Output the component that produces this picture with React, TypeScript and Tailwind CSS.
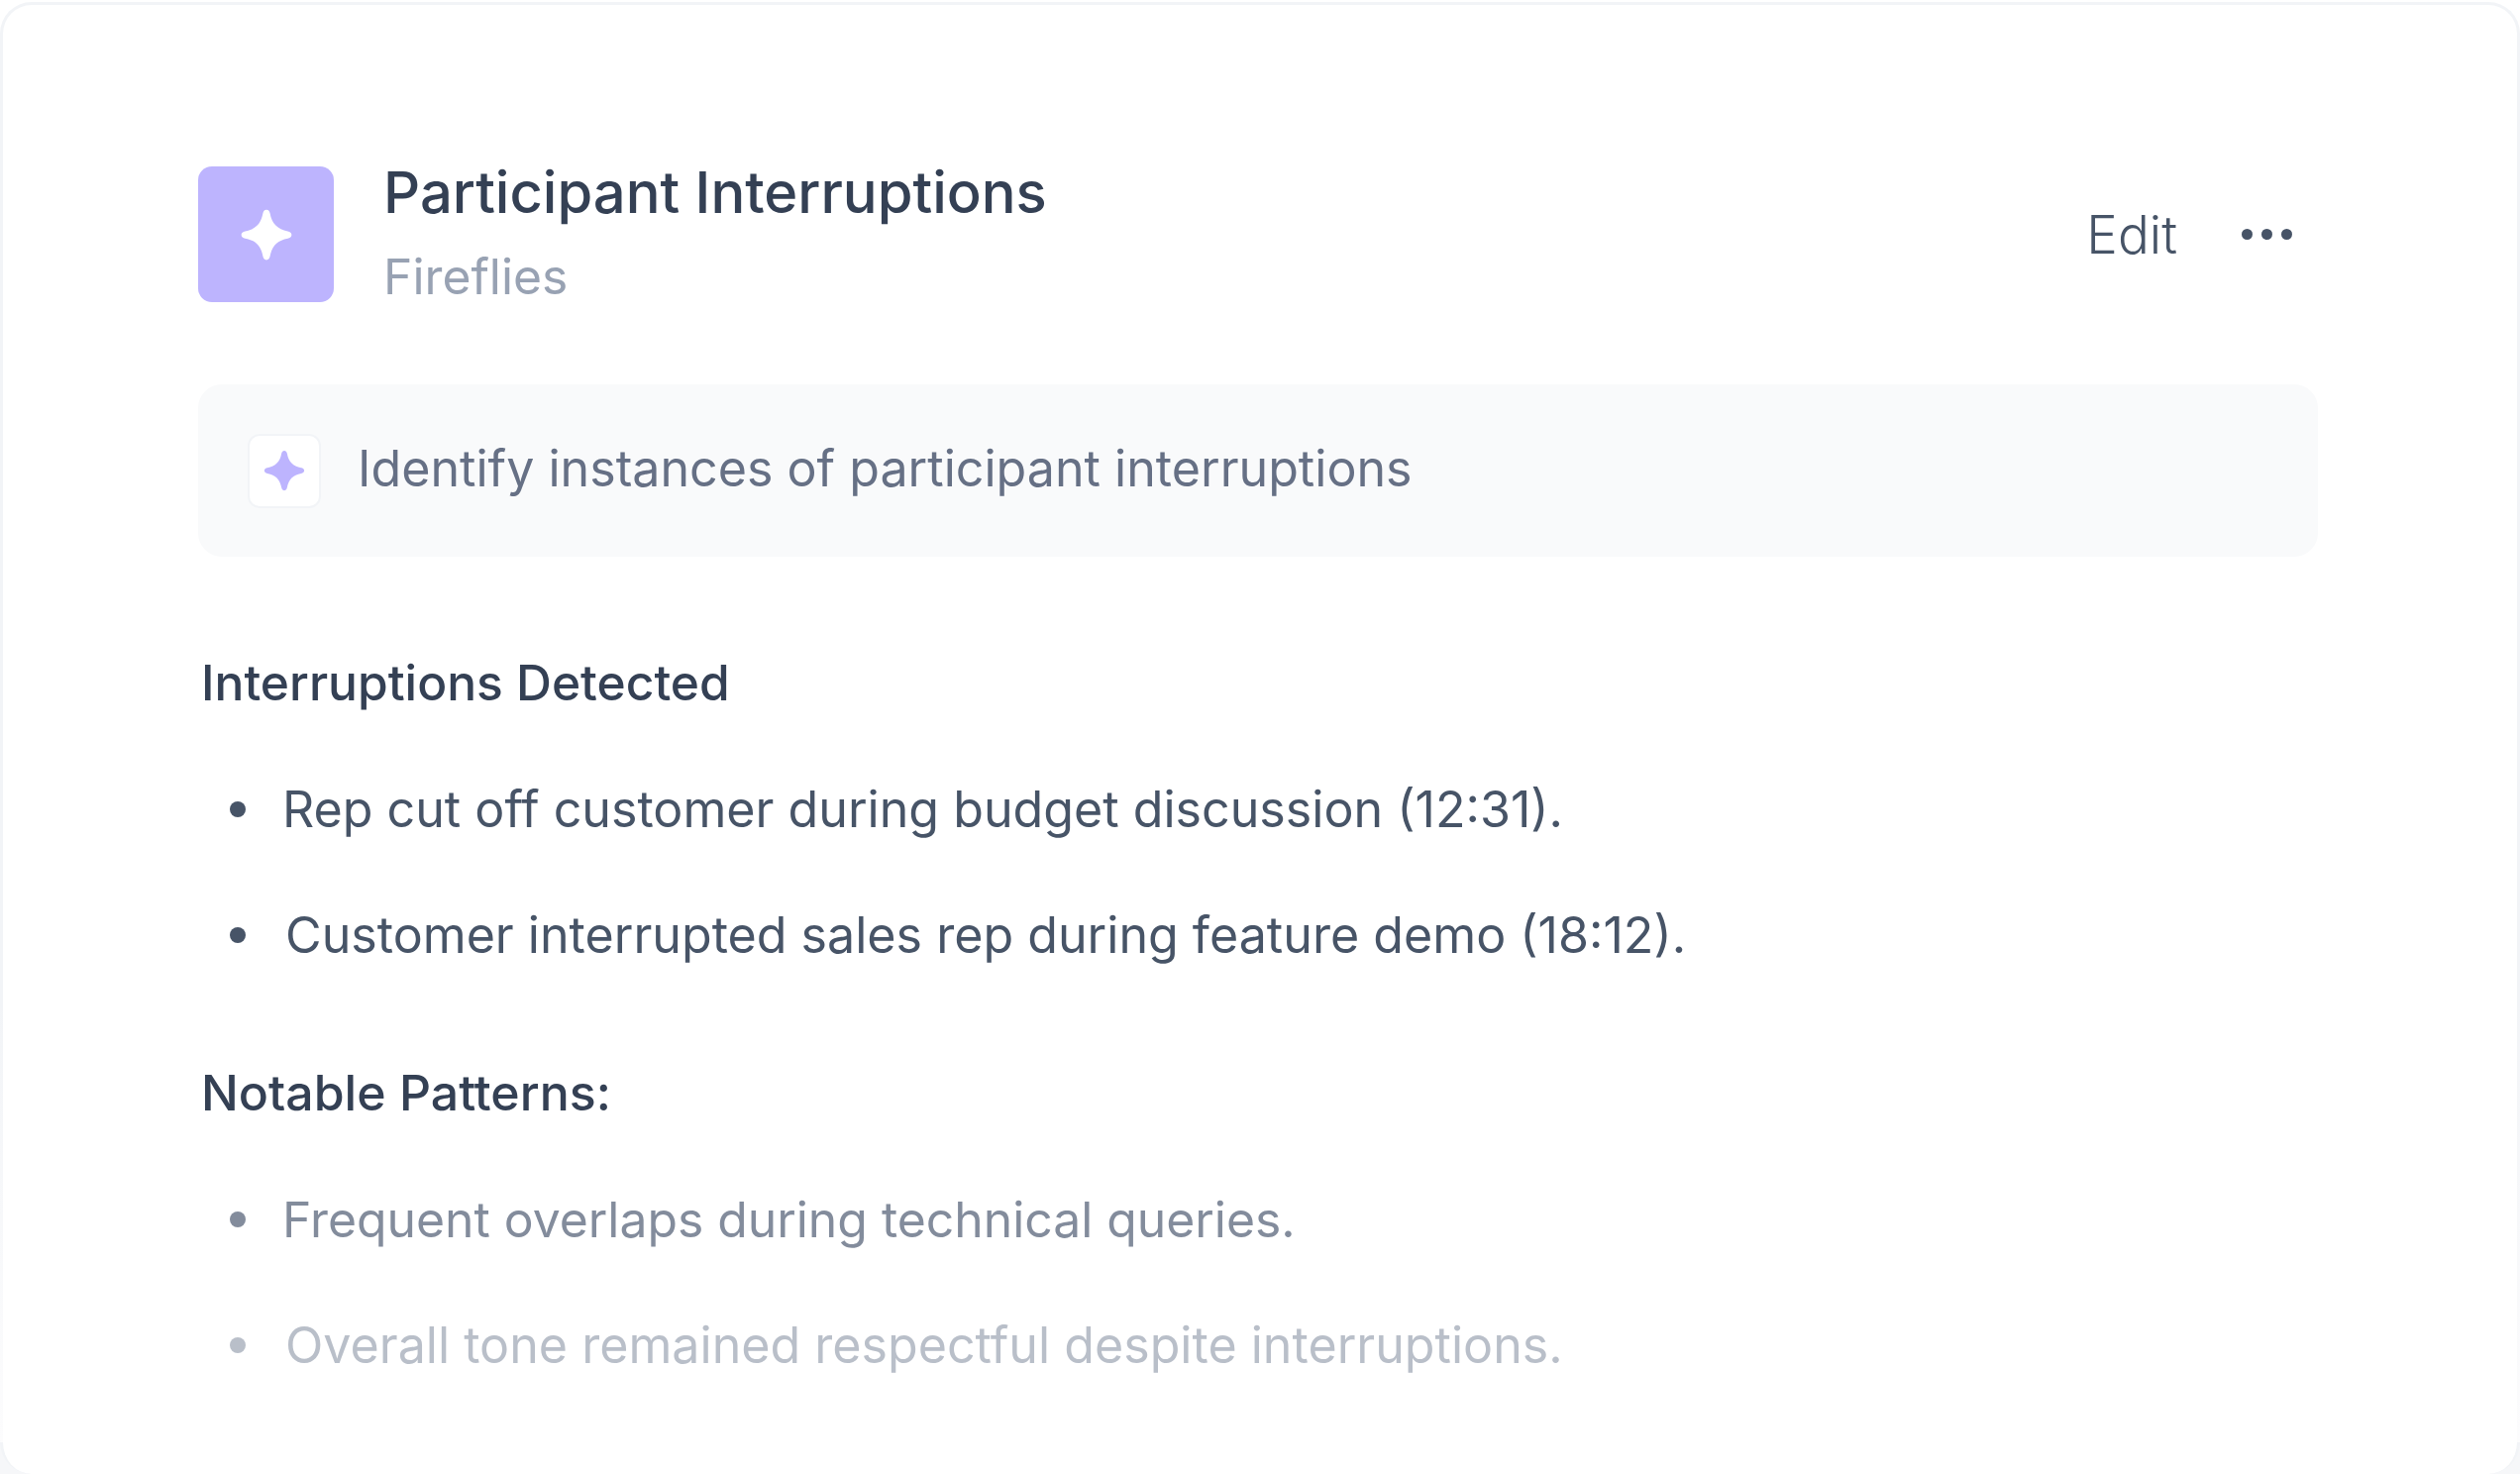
const sparkle =
  'M12 1.5c.9 0 1.3.7 1.5 1.6.8 4.3 3.1 6.6 7.4 7.4.9.2 1.6.6 1.6 1.5s-.7 1.3-1.6 1.5c-4.3.8-6.6 3.1-7.4 7.4-.2.9-.6 1.6-1.5 1.6s-1.3-.7-1.5-1.6c-.8-4.3-3.1-6.6-7.4-7.4-.9-.2-1.6-.6-1.6-1.5s.7-1.3 1.6-1.5c4.3-.8 6.6-3.1 7.4-7.4.2-.9.6-1.6 1.5-1.6z';

function Sparkle({ className }: { className: string }) {
  return (
    <svg className={className} viewBox="0 0 24 24" fill="currentColor" aria-hidden>
      <path d={sparkle} />
    </svg>
  );
}

function Bullet({ text, color, dot, indent }: { text: string; color: string; dot: string; indent: string }) {
  return (
    <li className={`flex h-[127px] items-center ${color}`}>
      <span className={`ml-[29px] h-4 w-4 shrink-0 rounded-full ${dot}`} />
      <span className={indent}>{text}</span>
    </li>
  );
}

export default function App() {
  return (
    <div className="relative h-[1488px] w-[2544px] overflow-hidden bg-white pt-[2px] font-['Inter',sans-serif]">
      {/* corners behind the card, and the side borders fading out towards the bottom */}
      <div className="absolute bottom-0 left-0 h-[32px] w-[32px] bg-[#f6f7f9]" />
      <div className="absolute right-0 bottom-0 h-[32px] w-[32px] bg-[#f6f7f9]" />
      <div className="relative h-full rounded-[32px] border-x-[3px] border-t-[3px] border-[#f2f4f7] bg-white px-[197px] pt-[163px]">
        <header className="flex h-[137px] items-center justify-between">
          <div className="flex items-center gap-[50px]">
            <div className="flex h-[137px] w-[137px] items-center justify-center rounded-[14px] bg-[#bdb4fe] text-white">
              <Sparkle className="h-[58px] w-[58px]" />
            </div>
            <div className="-mt-[3px]">
              <h1 className="-mt-[3px] text-[57.9px] leading-[70px] font-medium text-[#344054]">Participant Interruptions</h1>
              <p className="mt-[20px] text-[49.8px] leading-[60px] text-[#98a2b3]">Fireflies</p>
            </div>
          </div>
          <div className="mr-[30px] flex items-center gap-[65px] text-[#475467]">
            <span className="text-[53px] leading-[60px] font-light">Edit</span>
            <div className="flex gap-[9px]">
              <span className="h-[11px] w-[11px] rounded-full bg-[#475467]" />
              <span className="h-[11px] w-[11px] rounded-full bg-[#475467]" />
              <span className="h-[11px] w-[11px] rounded-full bg-[#475467]" />
            </div>
          </div>
        </header>

        <div className="mt-[83px] flex h-[174px] w-[2140px] items-center gap-[37px] rounded-[24px] bg-[#f9fafb] pl-[50px]">
          <div className="flex h-[75px] w-[74px] items-center justify-center rounded-[12px] border-2 border-[#f2f4f7] bg-white text-[#bdb4fe]">
            <Sparkle className="h-[46px] w-[46px]" />
          </div>
          <p className="-mt-[4px] text-[50.15px] leading-[62px] text-[#667085]">Identify instances of participant interruptions</p>
        </div>

        <section className="mt-[96px] pl-[3px] text-[50.15px] leading-[62px]">
          <h2 className="text-[49.7px] font-medium text-[#344054]">Interruptions Detected</h2>
          <ul className="mt-[33px]">
            <Bullet text="Rep cut off customer during budget discussion (12:31)." color="text-[#475467]" dot="bg-[#475467]" indent="ml-[37px]" />
            <Bullet text="Customer interrupted sales rep during feature demo (18:12)." color="text-[#475467]" dot="bg-[#475467]" indent="ml-[40px]" />
          </ul>
          <h2 className="mt-[65px] text-[50px] font-medium text-[#344054]">Notable Patterns:</h2>
          <ul className="mt-[33px]">
            <Bullet text="Frequent overlaps during technical queries." color="text-[49.85px] text-[#838c9c]" dot="bg-[#838c9c]" indent="ml-[37px]" />
            <Bullet text="Overall tone remained respectful despite interruptions." color="text-[#b9bfc9]" dot="bg-[#b9bfc9]" indent="ml-[40px]" />
          </ul>
        </section>
      </div>
      <div className="absolute bottom-[32px] left-0 h-[456px] w-[3px] bg-gradient-to-b from-transparent to-[#fcfcfd]" />
      <div className="absolute right-0 bottom-[32px] h-[456px] w-[3px] bg-gradient-to-b from-transparent to-[#fcfcfd]" />
    </div>
  );
}
